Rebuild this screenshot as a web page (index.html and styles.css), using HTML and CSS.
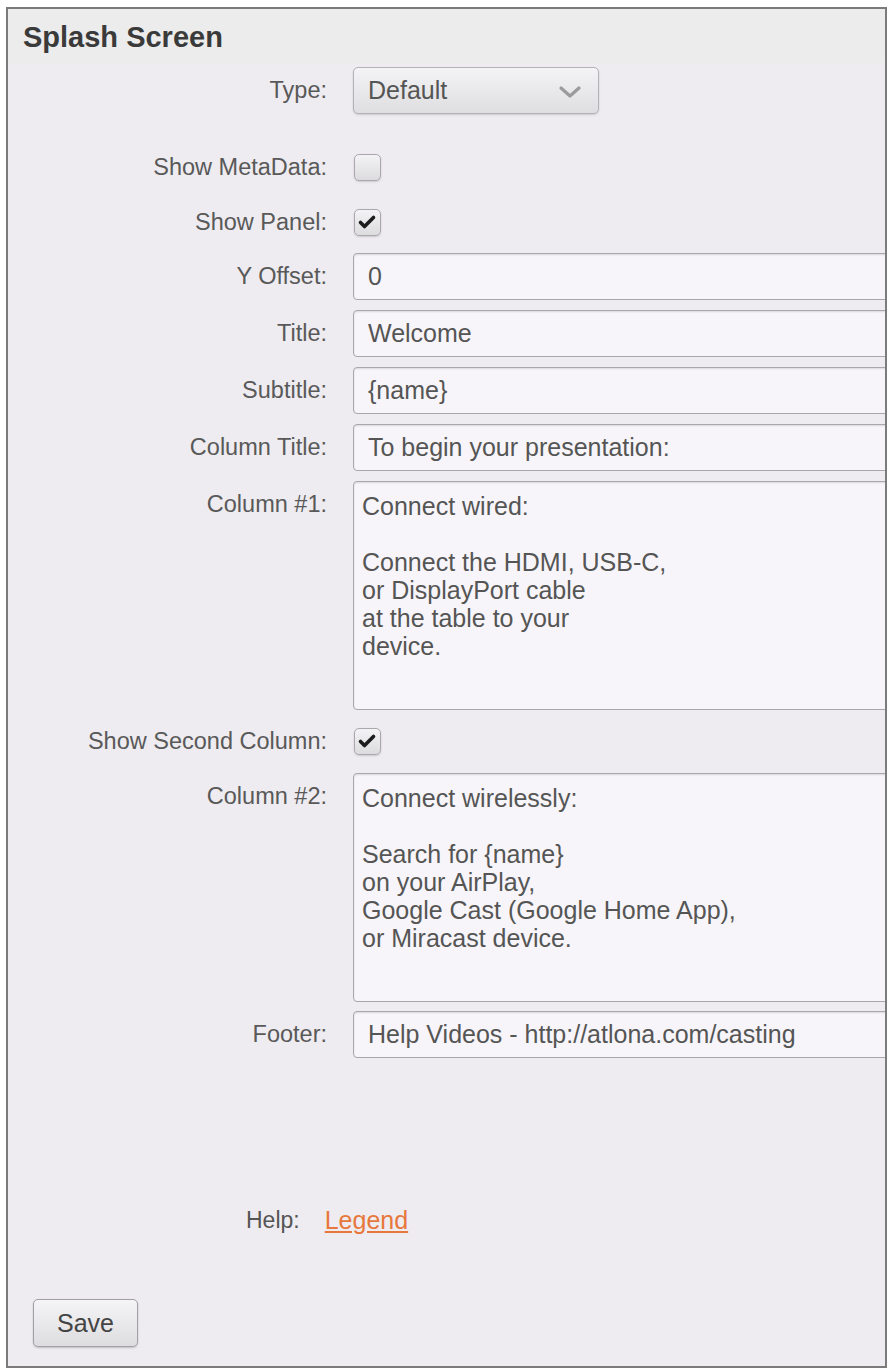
FILE: index.html
```html
<!DOCTYPE html>
<html lang="en">

<head>
  <meta charset="UTF-8">
  <meta name="viewport" content="width=device-width, initial-scale=1.0">
  <title>Splash Screen</title>
  <link rel="stylesheet" href="styles.css">
</head>

<body>
  <div class="panel">
    <header>
      <h2>Splash Screen</h2>
    </header>

    <form class="fields">
      <div class="row row-type">
        <label>Type:</label>
        <div class="select">
          <span>Default</span>
          <svg width="24" height="14" viewBox="0 0 24 14"><path d="M3 3 L12 11 L21 3" fill="none" stroke="#9b9b9b" stroke-width="3.2" stroke-linecap="round" stroke-linejoin="round"/></svg>
        </div>
      </div>

      <div class="row row-check first-check">
        <label>Show MetaData:</label>
        <span class="checkbox"></span>
      </div>

      <div class="row row-check">
        <label>Show Panel:</label>
        <span class="checkbox"><svg width="26" height="26" viewBox="0 0 26 26"><path d="M6.5 13.5 L10.5 17.5 L19.5 8.5" fill="none" stroke="#1c1c1c" stroke-width="3.6" stroke-linecap="round" stroke-linejoin="round"/></svg></span>
      </div>

      <div class="row row-input first-input">
        <label>Y Offset:</label>
        <input type="text" value="0">
      </div>

      <div class="row row-input">
        <label>Title:</label>
        <input type="text" value="Welcome">
      </div>

      <div class="row row-input">
        <label>Subtitle:</label>
        <input type="text" value="{name}">
      </div>

      <div class="row row-input">
        <label>Column Title:</label>
        <input type="text" value="To begin your presentation:">
      </div>

      <div class="row row-area">
        <label>Column #1:</label>
        <textarea>Connect wired:

Connect the HDMI, USB-C,
or DisplayPort cable
at the table to your
device.</textarea>
      </div>

      <div class="row row-check second-col">
        <label>Show Second Column:</label>
        <span class="checkbox"><svg width="26" height="26" viewBox="0 0 26 26"><path d="M6.5 13.5 L10.5 17.5 L19.5 8.5" fill="none" stroke="#1c1c1c" stroke-width="3.6" stroke-linecap="round" stroke-linejoin="round"/></svg></span>
      </div>

      <div class="row row-area">
        <label>Column #2:</label>
        <textarea>Connect wirelessly:

Search for {name}
on your AirPlay,
Google Cast (Google Home App),
or Miracast device.</textarea>
      </div>

      <div class="row row-input footer-row">
        <label>Footer:</label>
        <input type="text" value="Help Videos - http://atlona.com/casting">
      </div>

      <div class="help">
        <span>Help:</span>
        <a href="#">Legend</a>
      </div>

      <button type="button" class="save">Save</button>
    </form>
  </div>
</body>

</html>
```

FILE: styles.css
```css
* {
  box-sizing: border-box;
  margin: 0;
  padding: 0;
}

body {
  background: #fff;
  font-family: "Liberation Sans", Arial, sans-serif;
  color: #555;
}

.panel {
  margin: 7px 3px 3px 6px;
  border: 2px solid #7b7b7b;
  background: #eeecf0;
  overflow: hidden;
}

header {
  height: 54px;
  background: #ececec;
}

header>h2 {
  font-size: 29px;
  line-height: 56px;
  padding-left: 15px;
  color: #3a3a3a;
}

.fields {
  padding: 4px 0 19px;
}

.row {
  display: flex;
  align-items: center;
}

.row>label {
  flex: none;
  width: 319px;
  margin-right: 26px;
  text-align: right;
  font-size: 23.5px;
  color: #595959;
}

/* dropdown */
.select {
  width: 246px;
  height: 47px;
  display: flex;
  align-items: center;
  justify-content: space-between;
  padding: 0 16px 0 14px;
  border: 1px solid #b4b2b6;
  border-radius: 5px;
  background: linear-gradient(#f4f3f5, #dedde0);
  box-shadow: 0 1px 2px rgba(0, 0, 0, .15);
  font-size: 25px;
  color: #555;
}

.select svg {
  margin-top: 3px;
}

/* checkboxes */
.row-check {
  height: 55px;
}

.first-check {
  margin-top: 25px;
  height: 56px;
}

.second-col {
  height: 63px;
}

.checkbox {
  width: 27px;
  height: 27px;
  border: 1px solid #aaa8ac;
  border-radius: 5px;
  background: linear-gradient(#f3f2f4, #dcdbde);
  box-shadow: 0 1px 2px rgba(0, 0, 0, .15);
  margin-left: 1px;
}

.checkbox svg {
  display: block;
  margin: -1px 0 0 -1px;
}

/* text fields */
input,
textarea {
  flex: none;
  width: 600px;
  border: 1px solid #a9a7ab;
  border-radius: 4px;
  background: #f7f5f9;
  font-family: "Liberation Sans", Arial, sans-serif;
  font-size: 25px;
  color: #555;
  box-shadow: inset 0 1px 2px rgba(0, 0, 0, .12);
}

input {
  height: 47px;
  padding: 0 14px;
}

.row-input {
  margin-top: 10px;
}

.first-input {
  margin-top: 3px;
}

.footer-row {
  margin-top: 9px;
}

.row-area {
  align-items: flex-start;
  margin-top: 10px;
}

.row-area>label {
  padding-top: 10px;
}

textarea {
  height: 229px;
  padding: 10px 8px;
  line-height: 28px;
  resize: none;
}

.second-col+.row-area {
  margin-top: 0;
}

/* help link */
.help {
  display: flex;
  gap: 25px;
  margin-top: 149px;
  padding-left: 238px;
  font-size: 23px;
  line-height: 27px;
}

.help a {
  font-size: 25px;
  color: #e8773c;
}

.save {
  display: block;
  width: 105px;
  height: 48px;
  margin: 65px 0 0 25px;
  border: 1px solid #a2a0a4;
  border-radius: 5px;
  background: linear-gradient(#f5f4f6, #dddcdf);
  box-shadow: 0 1px 2px rgba(0, 0, 0, .2);
  font-family: "Liberation Sans", Arial, sans-serif;
  font-size: 25px;
  color: #444;
}
```
